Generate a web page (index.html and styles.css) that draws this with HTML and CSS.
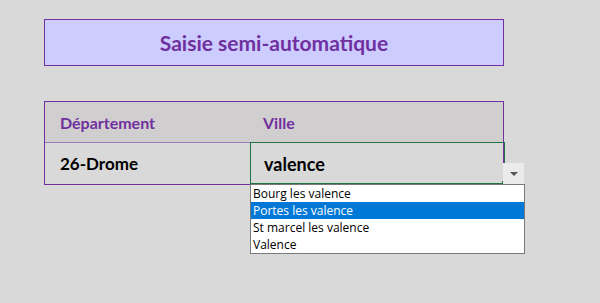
FILE: index.html
```html
<!DOCTYPE html>
<html lang="fr">
<head>
  <meta charset="UTF-8">
  <title>Saisie semi-automatique</title>
  <link rel="stylesheet" href="styles.css">
</head>
<body>
  <div class="sheet">
    <div class="title">Saisie semi-automatique</div>
    <div class="table">
      <div class="row head">
        <div class="cell">Département</div>
        <div class="cell">Ville</div>
      </div>
      <div class="row data">
        <div class="cell">26-Drome</div>
        <div class="cell">valence</div>
      </div>
      <div class="selection"><span class="handle"></span></div>
      <div class="drop-btn"><span class="arrow"></span></div>
      <ul class="choices">
        <li>Bourg les valence</li>
        <li class="active">Portes les valence</li>
        <li>St marcel les valence</li>
        <li>Valence</li>
      </ul>
    </div>
  </div>
</body>
</html>
```

FILE: styles.css
```css
body {
  margin: 0;
  padding: 0;
  background-color: #d9d9d9;
  font-family: Lato, "Open Sans", sans-serif;
}
.sheet {
  padding: 19px 0 0 44px;
  height: 284px;
}
.title {
  width: 460px;
  height: 47px;
  box-sizing: border-box;
  border: 1px solid #7030a0;
  background-color: #ccccff;
  color: #7030a0;
  font-weight: bold;
  font-size: 21px;
  display: flex;
  align-items: center;
  justify-content: center;
}
.table {
  position: relative;
  margin-top: 35px;
  width: 460px;
  box-sizing: border-box;
  border: 1px solid #7030a0;
}
.row {
  display: grid;
  grid-template-columns: 205px 1fr;
}
.cell {
  display: flex;
  align-items: center;
  padding-left: 15px;
}
.row .cell + .cell {
  padding-left: 13px;
}
.head {
  height: 40px;
  background-color: #d0cece;
  border-bottom: 1px solid #9a78bb;
  color: #7030a0;
  font-weight: bold;
  font-size: 16px;
}
.data {
  height: 41px;
  color: #000;
  font-weight: bold;
  font-size: 17px;
}
.data .cell + .cell {
  padding-left: 14px;
  font-size: 18px;
}
.selection {
  position: absolute;
  left: 205px;
  top: 40px;
  width: 255px;
  height: 42px;
  box-sizing: border-box;
  border: 1px solid #217346;
}
.handle {
  position: absolute;
  right: -3px;
  bottom: -3px;
  width: 5px;
  height: 5px;
  background-color: #217346;
}
.drop-btn {
  position: absolute;
  left: 458px;
  top: 61px;
  width: 21px;
  height: 21px;
  background-color: #ebebeb;
  display: flex;
  align-items: center;
  justify-content: center;
}
.arrow {
  width: 0;
  height: 0;
  border-left: 4px solid transparent;
  border-right: 4px solid transparent;
  border-top: 4px solid #555;
}
.choices {
  position: absolute;
  left: 205px;
  top: 82px;
  width: 275px;
  margin: 0;
  padding: 0;
  list-style: none;
  box-sizing: border-box;
  border: 1px solid #7a7a7a;
  background-color: #fff;
  font-family: "Open Sans", sans-serif;
  font-size: 12px;
  color: #000;
}
.choices li {
  height: 17px;
  line-height: 17px;
  padding-left: 2px;
}
.choices li.active {
  background-color: #0078d7;
  color: #fff;
}
```
